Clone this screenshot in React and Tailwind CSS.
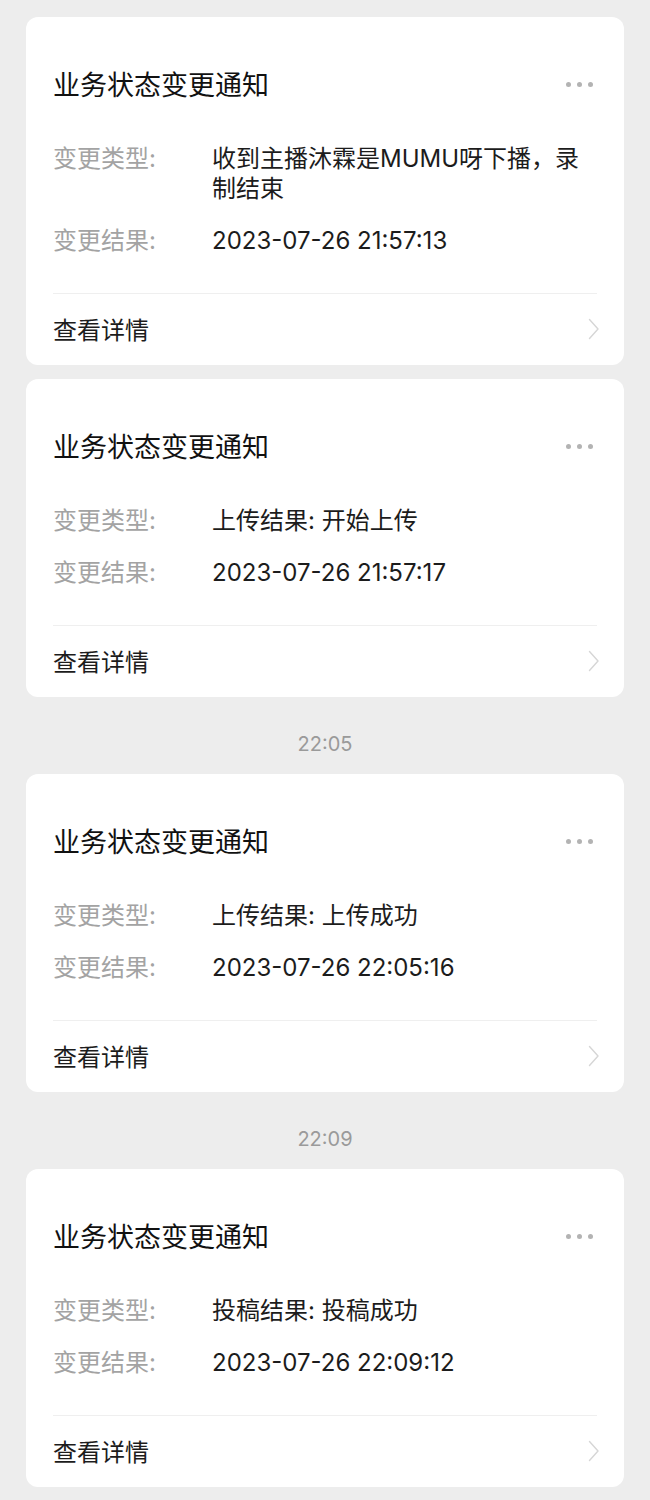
const notices = [
  { time: null, type: '收到主播沐霖是MUMU呀下播，录制结束', result: '2023-07-26 21:57:13' },
  { time: null, type: '上传结果: 开始上传', result: '2023-07-26 21:57:17' },
  { time: '22:05', type: '上传结果: 上传成功', result: '2023-07-26 22:05:16' },
  { time: '22:09', type: '投稿结果: 投稿成功', result: '2023-07-26 22:09:12' },
];

function MoreDots() {
  return (
    <div className="flex items-center gap-[6px] mr-[4px] -mt-[4px]">
      <span className="w-[5px] h-[5px] rounded-full bg-[#b3b3b3]" />
      <span className="w-[5px] h-[5px] rounded-full bg-[#b3b3b3]" />
      <span className="w-[5px] h-[5px] rounded-full bg-[#b3b3b3]" />
    </div>
  );
}

function Chevron() {
  return (
    <svg width="12" height="22" viewBox="0 0 12 22" fill="none" className="-mr-[3px] -mt-[2px]">
      <path d="M1.5 1.5 L10 11 L1.5 20.5" stroke="#d6d6d6" strokeWidth="1.4" strokeLinecap="round" strokeLinejoin="round" />
    </svg>
  );
}

function NoticeCard({ type, result }) {
  return (
    <div className="bg-white rounded-[12px] px-[27px]">
      <div className="pt-[51px] flex items-center justify-between">
        <h3 className="text-[27px] leading-[36px] text-[#111]">业务状态变更通知</h3>
        <MoreDots />
      </div>

      <div className="mt-[40px] flex flex-col gap-[22px]">
        <div className="flex text-[24px] leading-[30px]">
          <span className="w-[159px] shrink-0 text-[#a3a3a3]">变更类型:</span>
          <span className="flex-1 min-w-0 text-[#1c1c1c]">{type}</span>
        </div>
        <div className="flex text-[24px] leading-[30px]">
          <span className="w-[159px] shrink-0 text-[#a3a3a3]">变更结果:</span>
          <span className="flex-1 min-w-0 text-[#1c1c1c]">{result}</span>
        </div>
      </div>

      <div className="mt-[37px] border-t border-[#efefef] h-[72px] flex items-center justify-between">
        <span className="pt-[2px] text-[24px] leading-[30px] text-[#1c1c1c]">查看详情</span>
        <Chevron />
      </div>
    </div>
  );
}

export default function App() {
  return (
    <div className="min-h-[1500px] bg-[#ededed] px-[26px] pt-[17px] pb-[15px] font-['Inter','Noto_Sans_CJK_SC',sans-serif]">
      {notices.map((n, i) => (
        <div key={i} className={i === 0 ? '' : n.time ? '' : 'mt-[14px]'}>
          {n.time && (
            <div className="pt-[33px] pb-[16px] text-center text-[20px] leading-[28px] text-[#9a9a9a]">{n.time}</div>
          )}
          <NoticeCard type={n.type} result={n.result} />
        </div>
      ))}
    </div>
  );
}
